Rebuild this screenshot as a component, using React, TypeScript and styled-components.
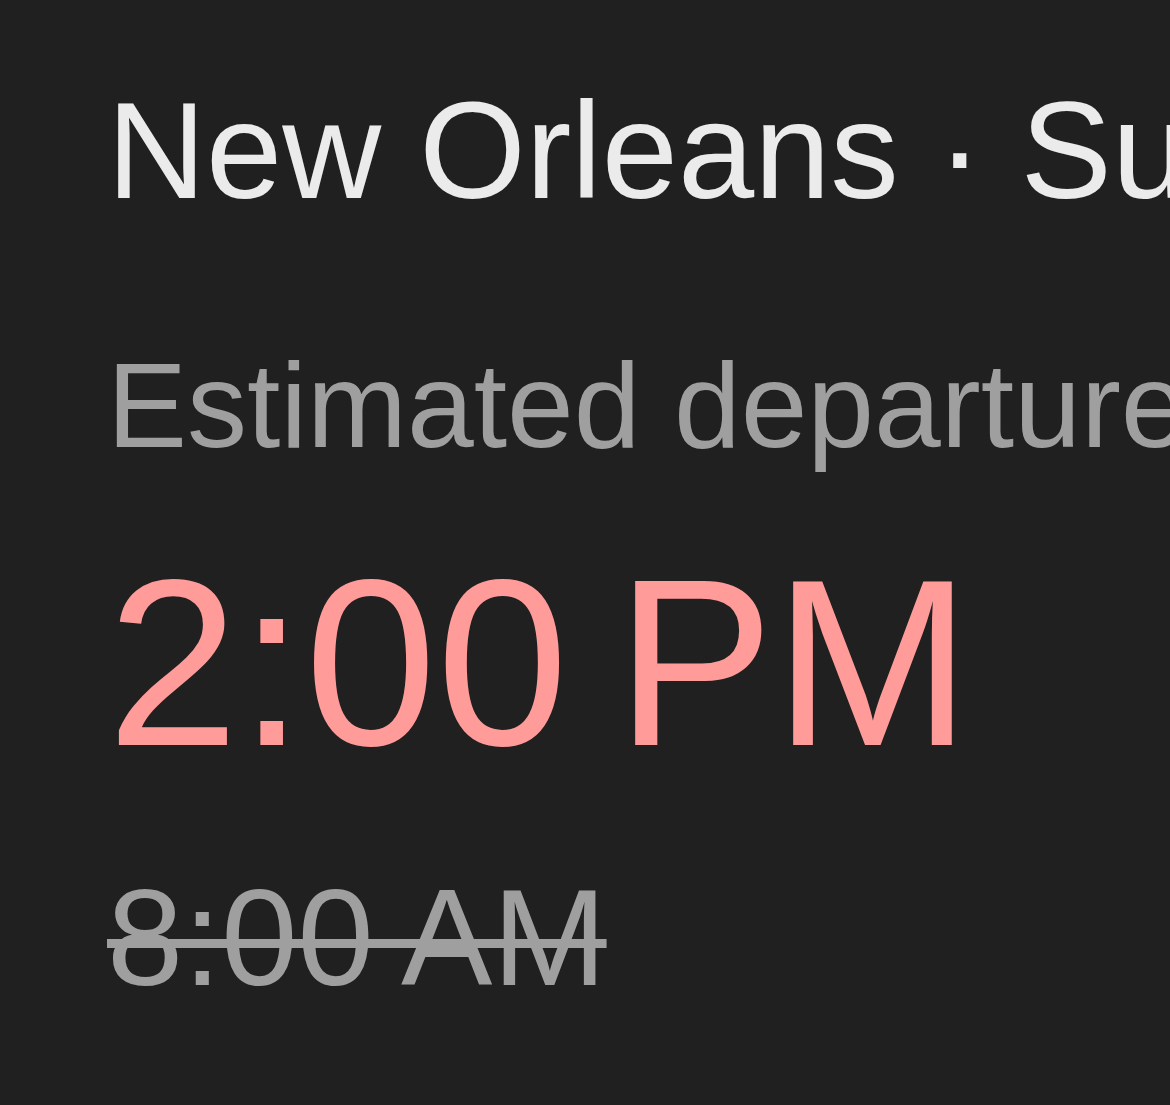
import React from "react";
import styled, { createGlobalStyle } from "styled-components";

const GlobalStyle = createGlobalStyle`
  html, body {
    margin: 0;
    padding: 0;
    background: #202020;
  }
  body {
    font-family: "Liberation Sans", Arial, Helvetica, sans-serif;
    overflow: hidden;
  }
`;

const Screen = styled.main`
  width: 1170px;
  height: 1105px;
  box-sizing: border-box;
  padding: 69px 0 0 107px;
  background: #202020;
  overflow: hidden;
  display: flex;
  flex-direction: column;
`;

const Title = styled.h1`
  margin: 0;
  font-size: 137px;
  line-height: 1.2;
  font-weight: 400;
  color: #ebebeb;
  white-space: nowrap;
`;

const Label = styled.div`
  margin-top: 100px;
  font-size: 120px;
  line-height: 1.2;
  color: #9f9f9f;
  white-space: nowrap;
`;

const Time = styled.div<{ $late?: boolean; $size: number; $gap: number }>`
  margin-top: ${({ $gap }) => $gap}px;
  font-size: ${({ $size }) => $size}px;
  line-height: 1.2;
  white-space: nowrap;
  color: ${({ $late }) => ($late ? "#ff9b99" : "#9f9f9f")};
  align-self: flex-start;
`;

const Struck = styled.span`
  text-decoration: line-through;
  text-decoration-thickness: 9px;
`;

interface Departure {
  city: string;
  day: string;
  estimated: string;
  scheduled: string;
}

const trip: Departure = {
  city: "New Orleans",
  day: "Sunday, March 3",
  estimated: "2:00\u202FPM",
  scheduled: "8:00\u202FAM",
};

export default function App() {
  return (
    <>
      <GlobalStyle />
      <Screen>
        <Title>
          {trip.city} · {trip.day}
        </Title>
        <Label>Estimated departure</Label>
        <Time $late $size={237} $gap={44}>
          {trip.estimated}
        </Time>
        <Time $size={137} $gap={50}>
          <Struck>{trip.scheduled}</Struck>
        </Time>
      </Screen>
    </>
  );
}
